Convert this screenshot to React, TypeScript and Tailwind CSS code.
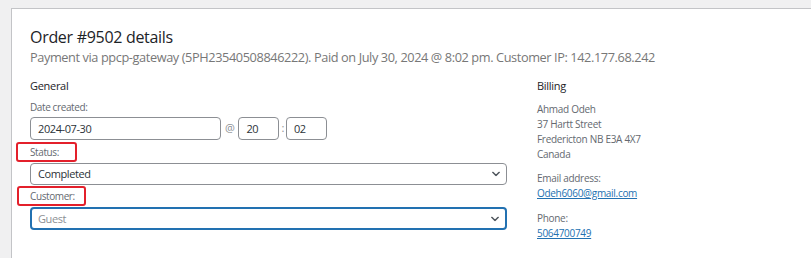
import React from "react";

const ChevronDown: React.FC = () => (
  <svg width="8" height="5" viewBox="0 0 8 5" className="absolute right-[6px] top-1/2 -translate-y-1/2" fill="none">
    <path d="M0.8 0.8L4 4l3.2-3.2" stroke="#50575e" strokeWidth="1.5" strokeLinecap="round" strokeLinejoin="round" />
  </svg>
);

const Annotated: React.FC<{ label: string; box: string }> = ({ label, box }) => (
  <div className="relative flex h-[20px] items-center text-[10px] tracking-[-0.4px] text-[#646970]">
    <span>{label}</span>
    <span className={`absolute top-0 h-[20px] rounded-[3px] border-2 border-[#e3202b] ${box}`} />
  </div>
);

const App: React.FC = () => {
  return (
    <div
      className="h-[258px] w-[811px] overflow-hidden bg-[#f0f0f1] pl-[11px] pt-[8px]"
      style={{ fontFamily: '"Open Sans", "Noto Sans", sans-serif' }}
    >
      <div className="h-[300px] border border-r-0 border-[#c3c4c7] bg-white pl-[18px] pt-[18px]">
        <h2 className="text-[16px] leading-[20px] tracking-[-0.3px] text-[#1d2327]">Order #9502 details</h2>
        <p className="mt-[1px] text-[12.75px] leading-[18px] tracking-[-0.4px] text-[#777]">
          Payment via ppcp-gateway (5PH23540508846222). Paid on July 30, 2024 @ 8:02 pm. Customer IP: 142.177.68.242
        </p>

        <div className="mt-[12px] flex gap-[30px]">
          <div className="w-[477px]">
            <h3 className="text-[11px] leading-[16px] font-medium tracking-[-0.3px] text-[#1d2327]">General</h3>
            <div className="mt-[6px] text-[10px] leading-[14px] tracking-[-0.4px] text-[#646970]">Date created:</div>
            <div className="mt-[3px] flex items-center text-[11px] tracking-[-0.4px] text-[#2c3338]">
              <div className="h-[23px] w-[191px] rounded-[4px] border border-[#8c8f94] px-[7px] leading-[21px]">2024-07-30</div>
              <span className="mx-[4px] text-[#8c8f94]">@</span>
              <div className="h-[23px] w-[41px] rounded-[4px] border border-[#8c8f94] px-[7px] leading-[21px]">20</div>
              <span className="mx-[2px] text-[#8c8f94]">:</span>
              <div className="h-[23px] w-[41px] rounded-[4px] border border-[#8c8f94] px-[7px] leading-[21px]">02</div>
            </div>

            <div className="mt-[2px]">
              <Annotated label="Status:" box="left-[-14px] w-[61px]" />
            </div>
            <div className="relative mt-[1px] h-[22px] rounded-[4px] border border-[#8c8f94] px-[7px] text-[11px] leading-[20px] tracking-[-0.4px] text-[#2c3338]">
              Completed
              <ChevronDown />
            </div>

            <div className="mt-[1px]">
              <Annotated label="Customer:" box="left-[-13px] w-[69px]" />
            </div>
            <div className="relative mt-[1px] h-[23px] rounded-[4px] border-2 border-[#2271b1] px-[6px] text-[11px] leading-[19px] tracking-[-0.4px] text-[#8c8f94]">
              Guest
              <ChevronDown />
            </div>
          </div>

          <div className="text-[10px] leading-[15px] tracking-[-0.3px] text-[#646970]">
            <h3 className="text-[11px] leading-[16px] font-medium text-[#1d2327]">Billing</h3>
            <div className="mt-[8px]">
              <div>Ahmad Odeh</div>
              <div>37 Hartt Street</div>
              <div>Fredericton NB E3A 4X7</div>
              <div>Canada</div>
            </div>
            <div className="mt-[9px]">Email address:</div>
            <a className="block text-[#2271b1] underline">Odeh6060@gmail.com</a>
            <div className="mt-[10px]">Phone:</div>
            <a className="block text-[#2271b1] underline">5064700749</a>
          </div>
        </div>
      </div>
    </div>
  );
};

export default App;
